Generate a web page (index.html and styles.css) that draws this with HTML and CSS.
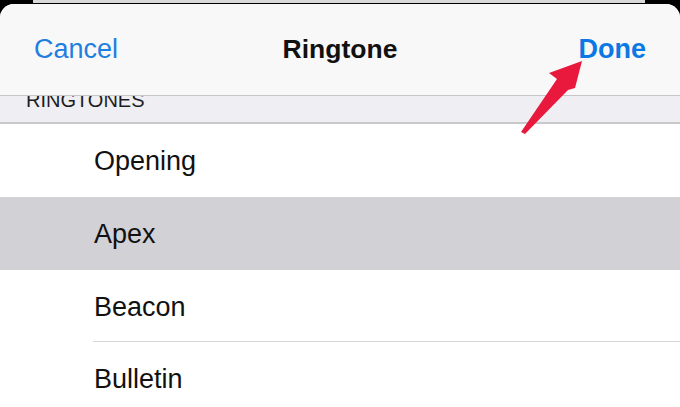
FILE: index.html
```html
<!DOCTYPE html>
<html lang="en">
<head>
<meta charset="utf-8">
<title>Ringtone</title>
<link rel="stylesheet" href="styles.css">
</head>
<body>
<div class="screen">
  <div class="back-sheet"></div>
  <div class="sheet">
    <header class="nav">
      <span class="nav-btn cancel">Cancel</span>
      <span class="nav-title">Ringtone</span>
      <span class="nav-btn done">Done</span>
    </header>
    <div class="section-head"><span class="section-label">RINGTONES</span></div>
    <ul class="list">
      <li class="row sep-hidden">Opening</li>
      <li class="row selected">Apex</li>
      <li class="row">Beacon</li>
      <li class="row">Bulletin</li>
    </ul>
  </div>
  <svg class="arrow" width="680" height="407" viewBox="0 0 680 407" aria-hidden="true">
    <polygon points="582,61 549,73 557,79 521,132 525,134 568,90 575,88" fill="#e8193d"/>
  </svg>
</div>
</body>
</html>
```

FILE: styles.css
```css
html, body {
  margin: 0;
  padding: 0;
}
body {
  background: #000;
  font-family: "Liberation Sans", Arial, sans-serif;
  width: 680px;
  height: 407px;
  overflow: hidden;
}
.screen {
  position: relative;
  width: 680px;
  height: 407px;
  overflow: hidden;
  display: flex;
  flex-direction: column;
}
.back-sheet {
  height: 3px;
  margin: 0 35px 0 33px;
  background: #d9d9d9;
  flex: none;
}
.sheet {
  flex: 1;
  margin-top: 1px;
  background: #fff;
  border-radius: 14px 14px 0 0;
  overflow: hidden;
  display: flex;
  flex-direction: column;
}
.nav {
  height: 91px;
  flex: none;
  background: #f8f8f8;
  border-bottom: 1px solid #c6c6c8;
  display: grid;
  grid-template-columns: 1fr auto 1fr;
  align-items: center;
  padding: 0 34px;
  position: relative;
  z-index: 1;
}
.nav-btn {
  font-size: 27px;
  color: #1f7fe0;
}
.cancel {
  justify-self: start;
}
.done {
  justify-self: end;
  font-weight: bold;
  color: #0b78e6;
}
.nav-title {
  font-size: 26.5px;
  font-weight: bold;
  color: #111;
}
.section-head {
  height: 26px;
  flex: none;
  background: #efeff3;
  border-bottom: 2px solid #c9c9cc;
  overflow: hidden;
  padding-left: 26px;
}
.section-label {
  display: block;
  margin-top: -6px;
  font-size: 20px;
  line-height: 20px;
  color: #1d1d1f;
}
.list {
  list-style: none;
  margin: 0;
  padding: 0;
  background: #fff;
}
.row {
  position: relative;
  height: 73px;
  display: flex;
  align-items: center;
  padding-left: 94px;
  padding-top: 2px;
  box-sizing: border-box;
  font-size: 27px;
  color: #111;
}
.row::after {
  content: "";
  position: absolute;
  left: 93px;
  right: 0;
  bottom: 0;
  height: 1px;
  background: #d6d6d8;
}
.row.selected {
  background: #d1d1d6;
}
.row.selected::after,
.row.sep-hidden::after {
  display: none;
}
.row:nth-child(3) {
  height: 72px;
}
.arrow {
  position: absolute;
  left: 0;
  top: 0;
  z-index: 2;
}
```
